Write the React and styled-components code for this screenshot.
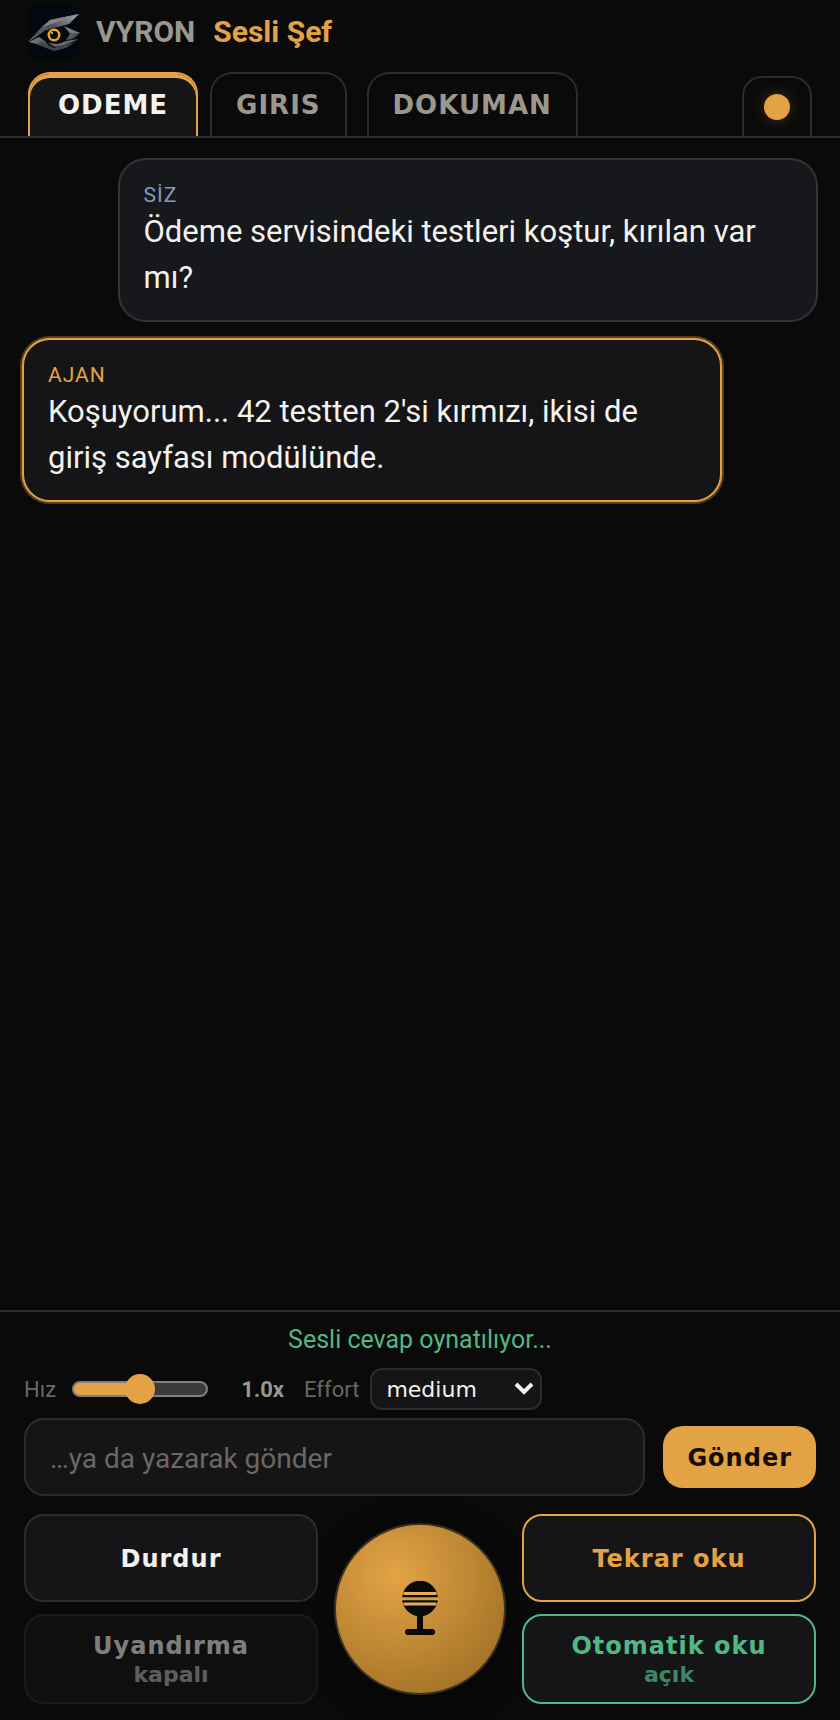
import React, { useState } from 'react'
import styled, { createGlobalStyle, css } from 'styled-components'

const gold = '#e3a345'
const green = '#50b885'
const line = '#2c2c2d'
const panel = '#151517'

const GlobalStyle = createGlobalStyle`
  * {
    box-sizing: border-box;
  }

  body {
    margin: 0;
    background: #0a0a0a;
    color: #f4f2ed;
    font-family: Roboto, sans-serif;
  }

  button, select {
    font-family: 'DejaVu Sans', sans-serif;
  }
`

const Screen = styled.div`
  display: flex;
  flex-direction: column;
  min-height: 100vh;
`

const Brand = styled.header`
  display: flex;
  align-items: center;
  gap: 16px;
  height: 64px;
  padding: 0 28px;
`

const Title = styled.h1`
  margin: 0;
  font-size: 30px;
  line-height: 36px;
  font-weight: 700;
  color: #9b978e;
`

const Accent = styled.span`
  margin-left: 18px;
  color: ${gold};
`

const TabBar = styled.nav`
  display: flex;
  align-items: flex-end;
  gap: 20px;
  padding: 8px 28px 0;
  border-bottom: 2px solid ${line};
`

const TabGroup = styled.div`
  display: flex;
  gap: 12px;
`

const Tab = styled.button`
  height: 64px;
  padding: 0 24px;
  border: 2px solid ${line};
  border-bottom: 0;
  border-radius: 22px 22px 0 0;
  background: transparent;
  color: #9b978e;
  font-size: 26px;
  font-weight: 700;
  letter-spacing: 1px;

  ${({ $active }) => $active && css`
    padding: 0 28px;
    border-color: ${gold};
    background: ${panel};
    box-shadow: inset 0 4px 0 ${gold};
    color: #f4f2ed;
  `}
`

const StatusTab = styled.button`
  display: flex;
  align-items: center;
  justify-content: center;
  width: 70px;
  height: 60px;
  margin-left: auto;
  padding: 0;
  border: 2px solid ${line};
  border-bottom: 0;
  border-radius: 20px 20px 0 0;
  background: transparent;
`

const Dot = styled.span`
  width: 26px;
  height: 26px;
  border-radius: 50%;
  background: ${gold};
  box-shadow: 0 0 16px rgba(227, 163, 69, 0.25);
`

const Chat = styled.main`
  display: flex;
  flex: 1;
  flex-direction: column;
  gap: 16px;
  padding: 20px 22px;
`

const Bubble = styled.article`
  width: 88%;
  padding: 21px 24px 19px;
  border: 2px solid ${gold};
  border-radius: 28px;
  background: ${panel};
  box-shadow: 0 0 0 2px rgba(227, 163, 69, 0.35);

  ${({ $mine }) => $mine && css`
    align-self: flex-end;
    border-color: #333438;
    background: #17181c;
    box-shadow: none;
  `}
`

const Sender = styled.div`
  font-size: 21px;
  line-height: 28px;
  letter-spacing: 1px;
  color: ${({ $mine }) => ($mine ? '#8799bd' : gold)};
`

const Message = styled.p`
  margin: 0;
  font-size: 31px;
  line-height: 46px;
`

const Controls = styled.footer`
  padding: 12px 24px 16px;
  border-top: 2px solid ${line};
`

const Status = styled.p`
  margin: 0;
  font-size: 25px;
  line-height: 32px;
  text-align: center;
  color: ${green};
`

const Settings = styled.div`
  display: flex;
  align-items: center;
  height: 42px;
  margin-top: 12px;
  font-size: 22px;
  color: #6b6862;
`

const Slider = styled.input`
  appearance: none;
  width: 136px;
  height: 16px;
  margin: 0 0 0 16px;
  border: 2px solid #808080;
  border-radius: 8px;
  background: linear-gradient(to right, ${gold} 50%, #3b3b3b 50%);

  &::-webkit-slider-thumb {
    appearance: none;
    width: 30px;
    height: 30px;
    border-radius: 50%;
    background: ${gold};
  }
`

const Speed = styled.output`
  width: 76px;
  margin-right: 20px;
  font-weight: 700;
  text-align: right;
  color: #9b978e;
`

const SelectWrap = styled.span`
  position: relative;
  display: flex;
  margin-left: 11px;

  svg {
    position: absolute;
    top: 14px;
    right: 8px;
    pointer-events: none;
  }
`

const Select = styled.select`
  appearance: none;
  width: 172px;
  height: 42px;
  padding: 0 14px;
  border: 2px solid ${line};
  border-radius: 12px;
  background: ${panel};
  color: #f4f2ed;
  font-size: 22px;
`

const Composer = styled.form`
  display: flex;
  align-items: center;
  gap: 18px;
  margin-top: 8px;
`

const TextField = styled.input`
  flex: 1;
  min-width: 0;
  height: 78px;
  padding: 2px 24px 0;
  border: 2px solid ${line};
  border-radius: 20px;
  background: ${panel};
  color: #f4f2ed;
  font-family: Roboto, sans-serif;
  font-size: 28px;

  &::placeholder {
    color: #6b6862;
  }
`

const Send = styled.button`
  height: 62px;
  padding: 2px 24px 0;
  border: 0;
  border-radius: 20px;
  background: ${gold};
  color: #130d03;
  font-size: 24px;
  font-weight: 700;
  letter-spacing: 1px;
`

const Pad = styled.div`
  display: grid;
  grid-template-columns: 1fr 172px 1fr;
  grid-template-rows: 88px 90px;
  grid-auto-flow: column;
  gap: 12px 16px;
  margin-top: 18px;
`

const PadButton = styled.button`
  display: flex;
  flex-direction: column;
  align-items: center;
  justify-content: center;
  padding: 2px 0 0;
  border: 2px solid ${({ $tone }) => $tone || line};
  border-radius: 20px;
  background: ${panel};
  color: ${({ $tone }) => $tone || '#f4f2ed'};
  font-size: 24px;
  line-height: 30px;
  font-weight: 700;
  letter-spacing: 1px;

  &:disabled {
    opacity: 0.5;
  }
`

const Sub = styled.small`
  font-size: 22px;
  line-height: 28px;
  letter-spacing: 0;
  opacity: 0.7;
`

const MicButton = styled.button`
  grid-row: span 2;
  display: flex;
  align-items: center;
  justify-content: center;
  align-self: center;
  height: 172px;
  padding: 0;
  border: 2px solid #3a3020;
  border-radius: 50%;
  background: radial-gradient(circle at 35% 30%, ${gold}, #946820);
  box-shadow: 0 8px 32px rgba(0, 0, 0, 0.5);
`

const EyeLogo = () => (
  <svg width='52' height='52' viewBox='0 0 52 52' aria-hidden='true'>
    <defs>
      <linearGradient id='brow' x1='0' y1='1' x2='1' y2='0'>
        <stop offset='0' stopColor='#6d6e75' />
        <stop offset='0.5' stopColor='#4b4c53' />
        <stop offset='1' stopColor='#a9aab0' />
      </linearGradient>
      <linearGradient id='lid' x1='0' y1='0' x2='1' y2='1'>
        <stop offset='0' stopColor='#8d8e95' />
        <stop offset='1' stopColor='#303138' />
      </linearGradient>
    </defs>
    <rect width='52' height='52' rx='6' fill='#03070e' />
    <path d='M0 36 13 22 22 14 51 8 41 18 30 21 16 25 8 31Z' fill='url(#brow)' />
    <path d='M13 22 22 14 51 8 31 15Z' fill='#85868d' />
    <path d='M0 36 13 22 30 19 16 25Z' fill='#54555c' />
    <path d='M36 20 52 27 45 33 38 34 42 28Z' fill='url(#lid)' />
    <path d='M38 22 52 27 44 27Z' fill='#7b7c83' />
    <path d='M1 36 11 31 17 35 23 43 8 38Z' fill='url(#lid)' />
    <path d='M8 38 14 36 26 42 46 36 51 33 38 42 26 45Z' fill='#44454c' />
    <path d='M20 37 30 38 38 35 51 33 36 39 27 41Z' fill='#696a71' />
    <path d='M16 25 30 21 37 24 39 30 34 36 22 36 17 32Z' fill='#080a0e' />
    <circle cx='26' cy='29' r='5' fill='none' stroke='#e9a820' strokeWidth='3' />
    <circle cx='26' cy='29' r='4' fill='#08080a' />
    <circle cx='24' cy='27' r='1' fill='#f3d27a' />
  </svg>
)

const MicIcon = () => (
  <svg width='38' height='56' viewBox='0 0 38 56' aria-hidden='true'>
    <circle cx='19' cy='17.5' r='17.8' fill='#0a0a0a' />
    <path d='M2.5 12.5h33M2.5 23h33' stroke='#e5ae56' strokeWidth='3.2' />
    <path d='M1 17.8h36' stroke='#d69c44' strokeWidth='3' />
    <path d='M16 34h6v14h9a3 3 0 0 1 0 6H7a3 3 0 0 1 0-6h9z' fill='#0a0a0a' />
  </svg>
)

const messages = [
  { id: 1, mine: true, sender: 'SİZ', text: 'Ödeme servisindeki testleri koştur, kırılan var mı?' },
  { id: 2, mine: false, sender: 'AJAN', text: "Koşuyorum... 42 testten 2'si kırmızı, ikisi de giriş sayfası modülünde." }
]

const App = () => {
  const [speed, setSpeed] = useState(1)

  return (
    <Screen>
      <GlobalStyle />
      <Brand>
        <EyeLogo />
        <Title>VYRON<Accent>Sesli Şef</Accent></Title>
      </Brand>
      <TabBar>
        <TabGroup>
          <Tab $active>ODEME</Tab>
          <Tab>GIRIS</Tab>
        </TabGroup>
        <Tab>DOKUMAN</Tab>
        <StatusTab aria-label='Durum'><Dot /></StatusTab>
      </TabBar>
      <Chat>
        {messages.map(({ id, mine, sender, text }) => (
          <Bubble key={id} $mine={mine}>
            <Sender $mine={mine}>{sender}</Sender>
            <Message>{text}</Message>
          </Bubble>
        ))}
      </Chat>
      <Controls>
        <Status>Sesli cevap oynatılıyor...</Status>
        <Settings>
          <label htmlFor='speed'>Hız</label>
          <Slider
            id='speed'
            type='range'
            min='0.5'
            max='1.5'
            step='0.1'
            value={speed}
            onChange={e => setSpeed(Number(e.target.value))}
          />
          <Speed htmlFor='speed'>{speed.toFixed(1)}x</Speed>
          <label htmlFor='effort'>Effort</label>
          <SelectWrap>
            <Select id='effort' defaultValue='medium'>
              <option>low</option>
              <option>medium</option>
              <option>high</option>
            </Select>
            <svg width='20' height='14' viewBox='0 0 20 14' aria-hidden='true'>
              <path d='M2 2l8 8 8-8' fill='none' stroke='#f4f2ed' strokeWidth='4' />
            </svg>
          </SelectWrap>
        </Settings>
        <Composer onSubmit={e => e.preventDefault()}>
          <TextField aria-label='Mesaj' placeholder='…ya da yazarak gönder' />
          <Send>Gönder</Send>
        </Composer>
        <Pad>
          <PadButton>Durdur</PadButton>
          <PadButton disabled>Uyandırma<Sub>kapalı</Sub></PadButton>
          <MicButton aria-label='Konuş'><MicIcon /></MicButton>
          <PadButton $tone={gold}>Tekrar oku</PadButton>
          <PadButton $tone={green}>Otomatik oku<Sub>açık</Sub></PadButton>
        </Pad>
      </Controls>
    </Screen>
  )
}

export default App
